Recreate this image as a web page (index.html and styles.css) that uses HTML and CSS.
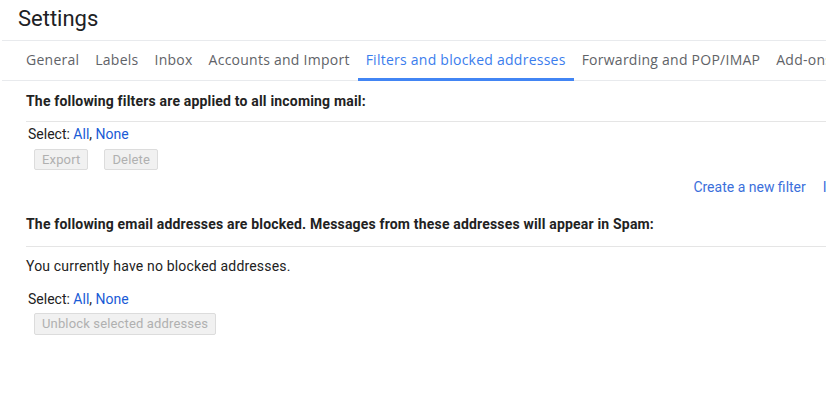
FILE: index.html
```html
<!DOCTYPE html>
<html lang="en">
<head>
<meta charset="utf-8">
<title>Settings</title>
<link rel="stylesheet" href="styles.css">
</head>
<body>
<div class="page">
  <header class="header">
    <h1 class="title">Settings</h1>
  </header>
  <nav class="tabs">
    <a class="tab">General</a>
    <a class="tab">Labels</a>
    <a class="tab">Inbox</a>
    <a class="tab">Accounts and Import</a>
    <a class="tab active">Filters and blocked addresses</a>
    <a class="tab">Forwarding and POP/IMAP</a>
    <a class="tab">Add-ons</a>
    <a class="tab">Chat and Meet</a>
  </nav>
  <main class="content">
    <section class="section">
      <h2 class="heading">The following filters are applied to all incoming mail:</h2>
      <div class="select">Select: <a class="link">All</a>, <a class="link">None</a></div>
      <div class="buttons">
        <button class="btn" disabled>Export</button>
        <button class="btn" disabled>Delete</button>
      </div>
      <div class="actions">
        <a class="action">Create a new filter</a>
        <a class="action">Import filters</a>
      </div>
    </section>
    <section class="section blocked">
      <h2 class="heading heading-2">The following email addresses are blocked. Messages from these addresses will appear in Spam:</h2>
      <p class="empty">You currently have no blocked addresses.</p>
      <div class="select select-2">Select: <a class="link">All</a>, <a class="link">None</a></div>
      <div class="buttons">
        <button class="btn btn-tall" disabled>Unblock selected addresses</button>
      </div>
    </section>
  </main>
</div>
</body>
</html>
```
FILE: styles.css
```css
html, body {
  margin: 0;
  padding: 0;
  background: #ffffff;
  overflow: hidden;
}

body {
  font-family: Roboto, "Liberation Sans", Arial, sans-serif;
  font-size: 14px;
  letter-spacing: 0.18px;
  color: #222222;
}

.page {
  width: 1000px;
  padding-left: 2px;
}

.header {
  border-bottom: 1px solid #e8eaed;
  padding: 5px 0 7px 16px;
}

.title {
  margin: 0;
  font-family: Roboto, "Open Sans", sans-serif;
  font-weight: 400;
  font-size: 22px;
  line-height: 28px;
  letter-spacing: 0;
  color: #202124;
}

.tabs {
  display: flex;
  border-bottom: 1px solid #e8eaed;
  padding-left: 16px;
  white-space: nowrap;
}

.tab {
  font-family: "Open Sans", Roboto, sans-serif;
  font-size: 14px;
  letter-spacing: 0.25px;
  line-height: 20px;
  color: #5f6368;
  padding: 9px 8px 8px 8px;
  border-bottom: 3px solid transparent;
  margin-bottom: -1px;
}

.tab.active {
  color: #3b7ded;
  border-bottom-color: #4285f4;
}

.content {
  padding-left: 24px;
}

.section {
  display: flex;
  flex-direction: column;
}

.heading {
  margin: 10px 0 0 0;
  font-size: 14px;
  font-weight: 700;
  line-height: 20px;
  color: #222222;
  padding-bottom: 10px;
  border-bottom: 1px solid #e5e5e5;
  white-space: nowrap;
}

.heading-2 {
  margin-top: 17px;
  padding-bottom: 12px;
}

.select {
  line-height: 20px;
  letter-spacing: 0;
  margin-top: 2px;
  padding-left: 2px;
  color: #222222;
}

.select-2 {
  margin-top: 13px;
}

.link {
  color: #1a5bd6;
}

.buttons {
  display: flex;
  gap: 16px;
  padding-left: 8px;
  margin-top: 5px;
}

.btn {
  font-family: Roboto, "Liberation Sans", Arial, sans-serif;
  font-size: 13px;
  letter-spacing: 0.15px;
  line-height: 18px;
  height: 21px;
  padding: 0 7px;
  background: #f1f1f1;
  border: 1px solid #dcdcdc;
  border-radius: 2px;
  color: #b0b0b0;
}

.btn-tall {
  height: 22px;
}

.blocked .buttons {
  margin-top: 4px;
}

.actions {
  display: flex;
  justify-content: flex-end;
  gap: 17px;
  margin-top: 7px;
  padding-right: 99px;
  line-height: 20px;
  letter-spacing: 0;
}

.action {
  color: #3b6fdb;
}

.empty {
  margin: 9px 0 0 0;
  line-height: 20px;
  color: #222222;
}
```
